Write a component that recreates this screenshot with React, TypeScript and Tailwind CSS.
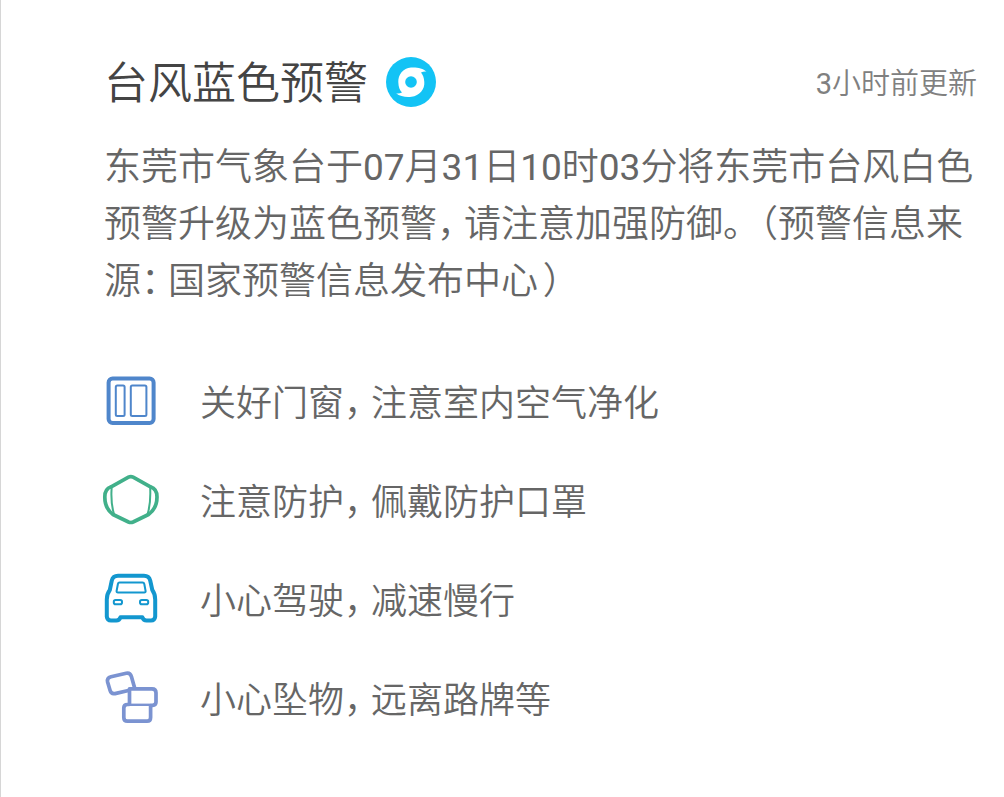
import type { ReactNode } from 'react';

// Half-width punctuation set in three quarters of a character cell
const withMarks = (text: string): ReactNode[] =>
    text.split(/([，。：（）]|\d+)/).map((part, i) => {
        if (part === '（') {
            return (
                <span key={i} className="inline-flex w-7 justify-end [font-feature-settings:'halt']">
                    {part}
                </span>
            );
        }
        if (part === '）') {
            return (
                <span key={i} className="inline-flex w-7 justify-center [font-feature-settings:'halt']">
                    {part}
                </span>
            );
        }
        if (/^[，。：]$/.test(part)) {
            return (
                <span key={i} className="inline-flex w-[27px] justify-start [font-feature-settings:'halt']">
                    {part}
                </span>
            );
        }
        if (/^\d+$/.test(part)) {
            return (
                <span key={i} className="font-normal">
                    {part}
                </span>
            );
        }
        return part;
    });

const TyphoonIcon = () => (
    <svg viewBox="0 0 50 50" className="size-[50px] shrink-0" aria-hidden="true">
        <circle cx="25" cy="25" r="25" fill="#13c3f5" />
        <path
            d="M40.5 14.7C37 11 30 10 25 10.5C17 11 12 18 12.3 25C12.5 30 13.5 33 16 35.5C14 36.5 12 36.8 10 36.3C14 39.5 20 40.3 25.5 39.7C33.5 39 39 32 38.3 25C38 20.5 37 18 35 15.5C37 14.7 38.5 14.4 40.5 14.7Z"
            fill="#fff"
        />
        <circle cx="25" cy="25" r="5.8" fill="#13c3f5" />
    </svg>
);

const WindowIcon = () => (
    <svg viewBox="0 0 64 64" className="size-16 shrink-0" fill="none" stroke="#4f86cb" aria-hidden="true">
        <rect x="8.6" y="9.6" width="45" height="44.5" rx="4" strokeWidth="4" />
        <rect x="15.8" y="16.6" width="8.8" height="30.4" rx="1.5" strokeWidth="2" />
        <rect x="30.8" y="16.6" width="15.6" height="30.4" rx="1.5" strokeWidth="2" />
    </svg>
);

const MaskIcon = () => (
    <svg
        viewBox="0 0 64 64"
        className="size-16 shrink-0"
        fill="none"
        stroke="#41b08a"
        strokeLinecap="round"
        strokeLinejoin="round"
        aria-hidden="true"
    >
        <path
            d="M28.5 9.2Q30.8 8 33.1 9.2L50.5 18.8Q57 20.8 57 29C57 37 54 42.5 48.5 46.5L33.1 54Q30.8 55 28.5 54L13 46.5C7.5 42.5 4.8 37 4.8 29Q4.8 20.8 11.1 18.8Z"
            strokeWidth="3.7"
        />
        <path d="M11.6 20.5C11 30 11.8 39 14 46M50.2 20.5C50.6 30 49.8 39 47.6 46" strokeWidth="2" />
    </svg>
);

const CarIcon = () => (
    <svg viewBox="0 0 64 64" className="size-16 shrink-0" fill="none" stroke="#1397cf" strokeLinejoin="round" aria-hidden="true">
        <path
            d="M18 8.8H44Q49 8.8 50.2 13.5L52.3 23Q55.2 27 55.2 32.5V49.5Q54.8 53.5 51 53.5H46.5Q43.5 53.5 42.3 50.2H20.5Q19.3 53.5 16.3 53.5H11Q7.2 53.5 6.8 49.5V32.5Q6.8 27 9.8 23L11.8 13.5Q13 8.8 18 8.8Z"
            strokeWidth="4"
        />
        <path d="M19.5 15.5H42.5Q44 15.5 44.3 17L45.6 24Q45.8 25.6 44.2 25.6H18Q16.4 25.6 16.6 24L17.9 17Q18.2 15.5 19.5 15.5Z" strokeWidth="2" />
        <rect x="13.8" y="33" width="8.2" height="4.2" rx="1.8" strokeWidth="2" />
        <rect x="40" y="33" width="8.2" height="4.2" rx="1.8" strokeWidth="2" />
    </svg>
);

const FallingIcon = () => (
    <svg viewBox="0 0 64 64" className="size-16 shrink-0" fill="none" stroke="#7b93d1" strokeLinejoin="round" aria-hidden="true">
        <path
            d="M34.8 22.5L31.4 10.4Q30.2 6.4 26.2 7.2L11 10.8Q6.7 12 7.6 16L10.1 24.6Q11.2 28.4 15 27.6L29.5 24.2"
            strokeWidth="3.7"
        />
        <path d="M29.5 38.5V22.8H52Q56 22.8 56 26.8V36Q56 39 52.5 39.3H50" strokeWidth="3.7" />
        <path d="M27.5 38.8H50" strokeWidth="2.4" />
        <path d="M29.5 38.5H27.5Q23.8 38.5 23.8 42V51.5Q23.8 55.2 27.5 55.2H47Q50.6 55.2 50.6 51.5V38.5" strokeWidth="3.7" />
    </svg>
);

const tips = [
    { text: '关好门窗，注意室内空气净化', icon: <WindowIcon /> },
    { text: '注意防护，佩戴防护口罩', icon: <MaskIcon /> },
    { text: '小心驾驶，减速慢行', icon: <CarIcon /> },
    { text: '小心坠物，远离路牌等', icon: <FallingIcon /> },
];

const App = () => {
    return (
        <main className="min-h-screen border-l border-[#d6d6d6] bg-white pt-[50px] pr-[27px] pl-[103px] font-['Roboto','Noto_Sans_CJK_SC',sans-serif] font-[350] text-[#666]">
            <header className="flex items-center justify-between">
                <div className="flex items-center gap-[18px]">
                    <h1 className="pt-1 text-[44px] leading-[60px] text-[#444]">台风蓝色预警</h1>
                    <TyphoonIcon />
                </div>
                <time className="pt-1 text-[29px] leading-[40px] text-[#808080]">{withMarks('3小时前更新')}</time>
            </header>

            <p className="mt-[25px] text-[37px] leading-[57px]">
                {withMarks('东莞市气象台于07月31日10时03分将东莞市台风白色预警升级为蓝色预警，请注意加强防御。（预警信息来源：国家预警信息发布中心）')}
            </p>

            <ul className="mt-[41px] -ml-1">
                {tips.map((tip) => (
                    <li key={tip.text} className="flex h-[99px] items-center gap-9">
                        {tip.icon}
                        <span className="pt-1.5 text-[36px] leading-[48px]">{withMarks(tip.text)}</span>
                    </li>
                ))}
            </ul>
        </main>
    );
};

export default App;
